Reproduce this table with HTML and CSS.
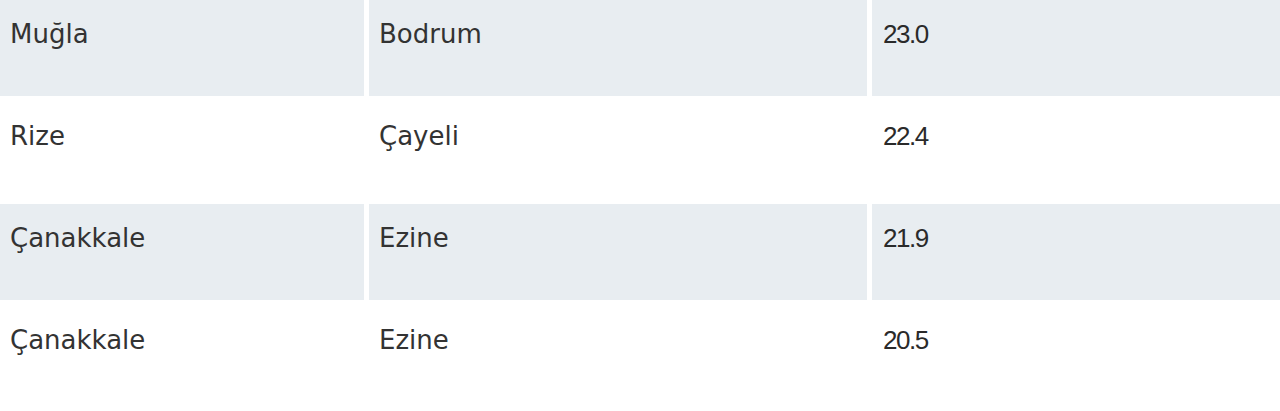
FILE: index.html
```html
<!DOCTYPE html>
<html lang="tr">
<head>
<meta charset="utf-8">
<link rel="stylesheet" href="styles.css">
</head>
<body>
<table class="data">
  <tbody>
    <tr class="row shaded"><td>Muğla</td><td>Bodrum</td><td class="num">23.0</td></tr>
    <tr class="row"><td>Rize</td><td>Çayeli</td><td class="num">22.4</td></tr>
    <tr class="row shaded"><td>Çanakkale</td><td>Ezine</td><td class="num">21.9</td></tr>
    <tr class="row"><td>Çanakkale</td><td>Ezine</td><td class="num">20.5</td></tr>
  </tbody>
</table>
</body>
</html>
```
FILE: styles.css
```css
html, body {
  margin: 0;
  padding: 0;
  background: #ffffff;
}
.data {
  width: 1290px;
  margin-top: -6px;
  margin-left: -5px;
  border-collapse: separate;
  border-spacing: 5px 6px;
  font-family: "DejaVu Sans", "Liberation Sans", sans-serif;
  font-size: 26px;
  color: #333333;
}
.data td {
  height: 96px;
  box-sizing: border-box;
  padding: 19px 10px 0 10px;
  vertical-align: top;
  line-height: 30px;
  white-space: nowrap;
}
.data td:nth-child(1) { width: 364px; }
.data td:nth-child(2) { width: 498px; }
.data td.num {
  font-family: "Liberation Sans", "Noto Sans", sans-serif;
  letter-spacing: -1.5px;
  padding-left: 11px;
  color: #2a2a2a;
}
.shaded td {
  background: #e8edf1;
}
```
